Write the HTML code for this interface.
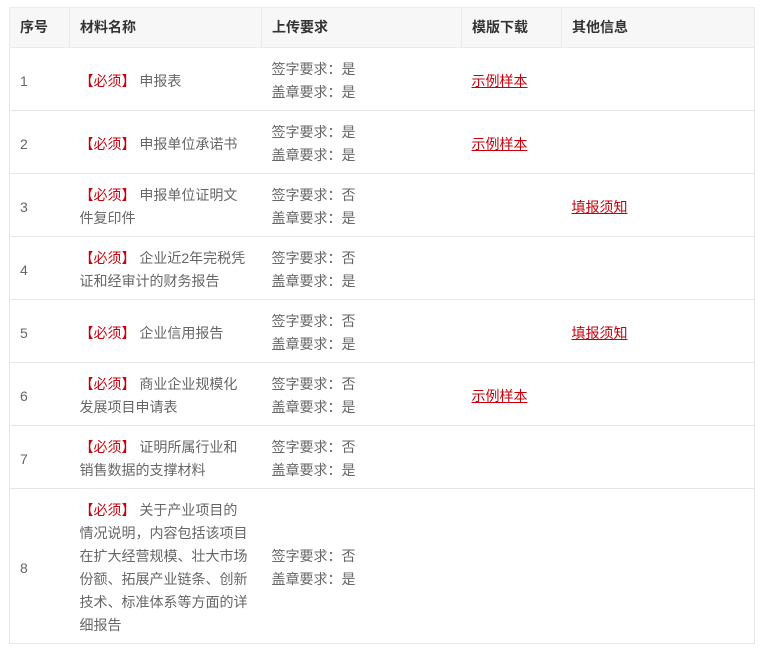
<!DOCTYPE html>
<html><head><meta charset="utf-8"><style>
body{margin:0;background:#fff;font-family:"Liberation Sans","Noto Sans CJK SC",sans-serif;}
table{position:absolute;left:9px;top:7px;width:745px;border-collapse:collapse;table-layout:fixed;font-size:14px;color:#666;border:1px solid #e6e6e6;}
td,th{padding:10px 10px 6px;line-height:23px;text-align:left;vertical-align:middle;border-bottom:1px solid #e6e6e6;}
td.n{padding-right:14px;}
th{background:#f7f7f7;color:#333;font-weight:bold;padding:8px 10px 8px;border:1px solid #ebebeb;}
.r{color:#c7000b;}
a{color:#c7000b;text-decoration:underline;}
</style></head><body>
<table>
<colgroup><col style="width:60px"><col style="width:192px"><col style="width:200px"><col style="width:100px"><col style="width:193px"></colgroup>
<tr><th>序号</th><th>材料名称</th><th>上传要求</th><th>模版下载</th><th>其他信息</th></tr>
<tr><td>1</td><td class="n"><span class="r">【必须】</span> 申报表</td><td>签字要求：是<br>盖章要求：是</td><td><a>示例样本</a></td><td></td></tr>
<tr><td>2</td><td class="n"><span class="r">【必须】</span> 申报单位承诺书</td><td>签字要求：是<br>盖章要求：是</td><td><a>示例样本</a></td><td></td></tr>
<tr><td>3</td><td class="n"><span class="r">【必须】</span> 申报单位证明文件复印件</td><td>签字要求：否<br>盖章要求：是</td><td></td><td><a>填报须知</a></td></tr>
<tr><td>4</td><td class="n"><span class="r">【必须】</span> 企业近2年完税凭证和经审计的财务报告</td><td>签字要求：否<br>盖章要求：是</td><td></td><td></td></tr>
<tr><td>5</td><td class="n"><span class="r">【必须】</span> 企业信用报告</td><td>签字要求：否<br>盖章要求：是</td><td></td><td><a>填报须知</a></td></tr>
<tr><td>6</td><td class="n"><span class="r">【必须】</span> 商业企业规模化发展项目申请表</td><td>签字要求：否<br>盖章要求：是</td><td><a>示例样本</a></td><td></td></tr>
<tr><td>7</td><td class="n"><span class="r">【必须】</span> 证明所属行业和销售数据的支撑材料</td><td>签字要求：否<br>盖章要求：是</td><td></td><td></td></tr>
<tr><td>8</td><td class="n"><span class="r">【必须】</span> 关于产业项目的情况说明，内容包括该项目在扩大经营规模、壮大市场份额、拓展产业链条、创新技术、标准体系等方面的详细报告</td><td>签字要求：否<br>盖章要求：是</td><td></td><td></td></tr>
</table>
</body></html>
